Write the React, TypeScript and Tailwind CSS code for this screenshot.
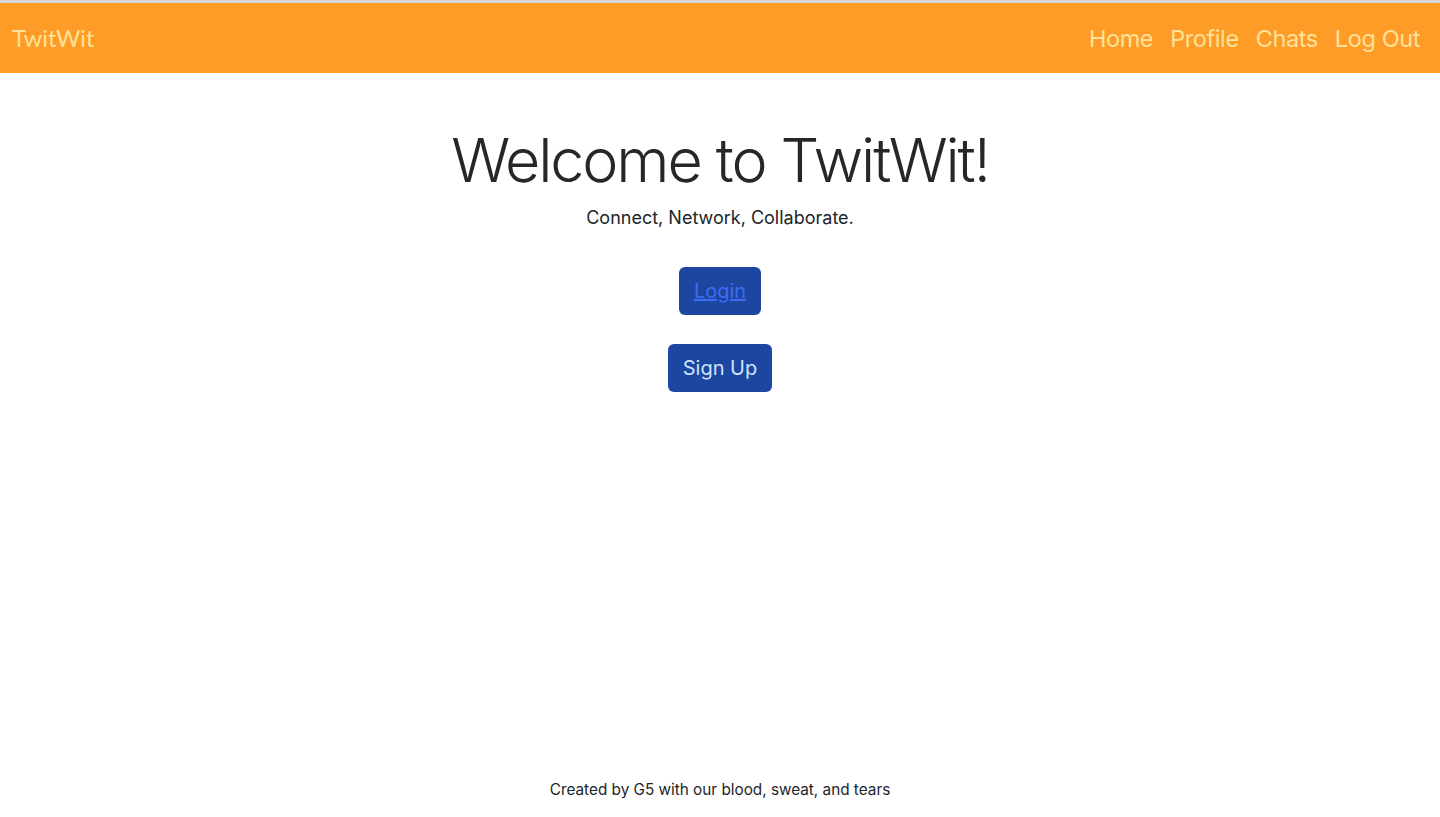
import React from "react";

export default function App() {
  return (
    <div className="min-h-[817px] flex flex-col bg-white" style={{ fontFamily: "Inter, 'Noto Sans', sans-serif" }}>
      <div className="h-[3px] bg-[#d6d6d6]" />
      <nav className="h-[70px] bg-[#ff9c27] flex items-center justify-between px-3 pt-[2px]">
        <span className="text-[23.5px] text-[#ffe29a]" style={{ fontFamily: "Lato, sans-serif" }}>TwitWit</span>
        <div className="flex items-center gap-[17px] text-[23.5px] tracking-[-0.4px] text-[#ffe29a] pr-2">
          <span>Home</span>
          <span>Profile</span>
          <span>Chats</span>
          <span>Log Out</span>
        </div>
      </nav>
      <main className="flex-1 flex flex-col items-center pt-[51px]">
        <h1 className="text-[61px] font-light text-[#25272b] leading-[1.2] tracking-[-2.1px]">Welcome to TwitWit!</h1>
        <p className="text-[18px] text-[#212529] mt-[7px]">Connect, Network, Collaborate.</p>
        <button className="mt-[36px] h-[48px] px-[15px] rounded-md bg-[#1c46a0] text-[20px] text-[#3d6cf5] underline">Login</button>
        <button className="mt-[29px] h-[48px] px-[15px] rounded-md bg-[#1c46a0] text-[20px] text-[#cfe2ff]">Sign Up</button>
      </main>
      <footer className="text-center text-[15.3px] text-[#212529] pb-[15px]">Created by G5 with our blood, sweat, and tears</footer>
    </div>
  );
}
